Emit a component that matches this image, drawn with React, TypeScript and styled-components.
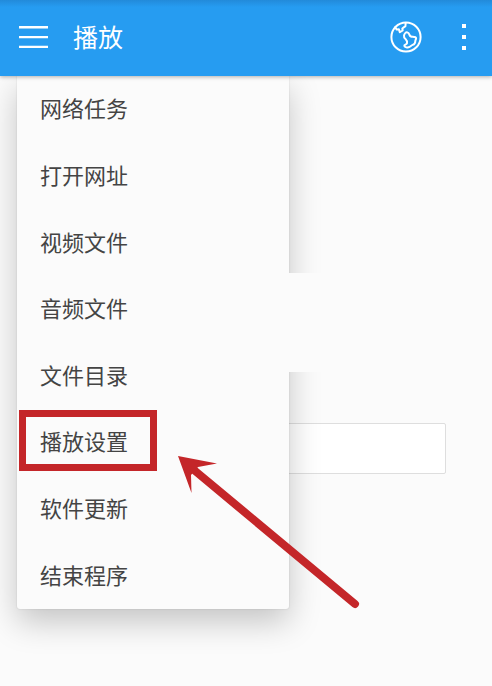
import React from "react";
import styled, { createGlobalStyle } from "styled-components";

const GlobalStyle = createGlobalStyle`
  * {
    box-sizing: border-box;
  }
  body {
    margin: 0;
    background: #fbfbfb;
    font-family: "Noto Sans CJK SC", sans-serif;
  }
  button {
    border: 0;
    padding: 0;
    background: none;
    color: inherit;
    font: inherit;
    cursor: pointer;
  }
`;

const Page = styled.div`
  position: relative;
  min-height: 100vh;
  overflow: hidden;
  background: #fbfbfb;
`;

const AppBar = styled.header`
  position: relative;
  z-index: 3;
  display: flex;
  align-items: center;
  height: 76px;
  padding: 0 0 2px 12px;
  color: #fff;
  background: linear-gradient(#228ada, #269cf1 7px);
  box-shadow: 0 1px 4px rgba(0, 0, 0, 0.3);
`;

const IconButton = styled.button<{ $width: number }>`
  display: grid;
  place-items: center;
  width: ${({ $width }) => $width}px;
  height: 44px;

  svg {
    display: block;
  }
`;

const Title = styled.h1`
  flex: 1;
  margin: 0 0 0 17px;
  padding-bottom: 3px;
  font-size: 25px;
  line-height: 36px;
  font-weight: 400;
`;

const Content = styled.main`
  padding: 347px 46px 0;
`;

const AddressInput = styled.input`
  display: block;
  width: 100%;
  height: 51px;
  padding: 0 12px;
  border: 1px solid #dedede;
  border-radius: 2px;
  background: #fff;
  font: inherit;
  outline: none;
`;

const Menu = styled.nav`
  position: absolute;
  z-index: 1;
  top: 76px;
  left: 17px;
  display: grid;
  grid-auto-rows: 1fr;
  width: 272px;
  height: 533px;
  border-radius: 0 0 3px 3px;
  background: #fbfbfb;
  box-shadow:
    0 0 2px rgba(0, 0, 0, 0.14),
    0 13px 32px rgba(0, 0, 0, 0.22);
`;

const MenuItem = styled.button`
  position: relative;
  padding: 0 0 4px 23px;
  text-align: left;
  color: #444;
  font-size: 22px;
  line-height: 32px;
`;

const Highlight = styled.span`
  position: absolute;
  top: 1px;
  left: 2px;
  width: 138px;
  height: 61px;
  border: 7px solid #c42629;
`;

const ClearBand = styled.div`
  position: absolute;
  z-index: 2;
  top: 273px;
  left: 289px;
  right: 0;
  height: 99px;
  background: #fbfbfb;
`;

const Arrow = styled.svg`
  position: absolute;
  z-index: 4;
  top: 450px;
  left: 170px;
  pointer-events: none;
`;

const items = [
  "网络任务",
  "打开网址",
  "视频文件",
  "音频文件",
  "文件目录",
  "播放设置",
  "软件更新",
  "结束程序",
];

export default function App() {
  return (
    <Page>
      <GlobalStyle />
      <AppBar>
        <IconButton $width={44} type="button" aria-label="菜单">
          <svg width="30" height="24" viewBox="0 0 30 24" fill="#fff">
            <path d="M0 1h29v2.4H0zM0 10.9h29v2.4H0zM0 20.7h29v2.4H0z" />
          </svg>
        </IconButton>
        <Title>播放</Title>
        <IconButton $width={60} type="button" aria-label="浏览器">
          <svg
            width="32"
            height="32"
            viewBox="0 0 32 32"
            fill="none"
            stroke="#fff"
            strokeWidth="2"
            strokeLinejoin="round"
            strokeLinecap="round"
          >
            <circle cx="16" cy="16" r="14.6" />
            <path d="M5.3 6.1 6.6 8.6l2.3-.4.9 3 2.9-1.7-.4-2 3.1-2.4.3-3.1" />
            <path d="M17.3 11.4c1.1.3 1.8 1.3 2.2 2.4.5 1.4 1.5 2 3.2 2 1.8 0 3.2.2 3.4 1.3.1 1.2-.8 1.8-.8 3.1 0 1.9-1 3.1-2.6 3.7-1.6.7-2.6 2-4.2 2.3-1.7.4-3.7-.1-4.2-1.3-.4-1.2 2.4-1.2 2.7-2.6.3-1.5-.2-3-1.3-4-1.2-1-2-2.1-1.7-3.7.3-1.5 1.6-3.5 3.3-3.2Z" />
          </svg>
        </IconButton>
        <IconButton $width={56} type="button" aria-label="更多">
          <svg width="4" height="26" viewBox="0 0 4 26" fill="#fff">
            <path d="M0 0h4v4H0zM0 11h4v4H0zM0 22h4v4H0z" />
          </svg>
        </IconButton>
      </AppBar>
      <Content>
        <AddressInput type="text" aria-label="网址" />
      </Content>
      <Menu aria-label="播放">
        {items.map((item) => (
          <MenuItem key={item} type="button">
            {item}
            {item === "播放设置" && <Highlight />}
          </MenuItem>
        ))}
      </Menu>
      <ClearBand />
      <Arrow width="192" height="162" viewBox="0 0 192 162" aria-hidden="true">
        <path d="M24 20 185 154" stroke="#c42629" strokeWidth="8" strokeLinecap="round" />
        <path d="M8 6 47 13.5 28 17 21 25 21.5 43Z" fill="#c42629" />
      </Arrow>
    </Page>
  );
}
